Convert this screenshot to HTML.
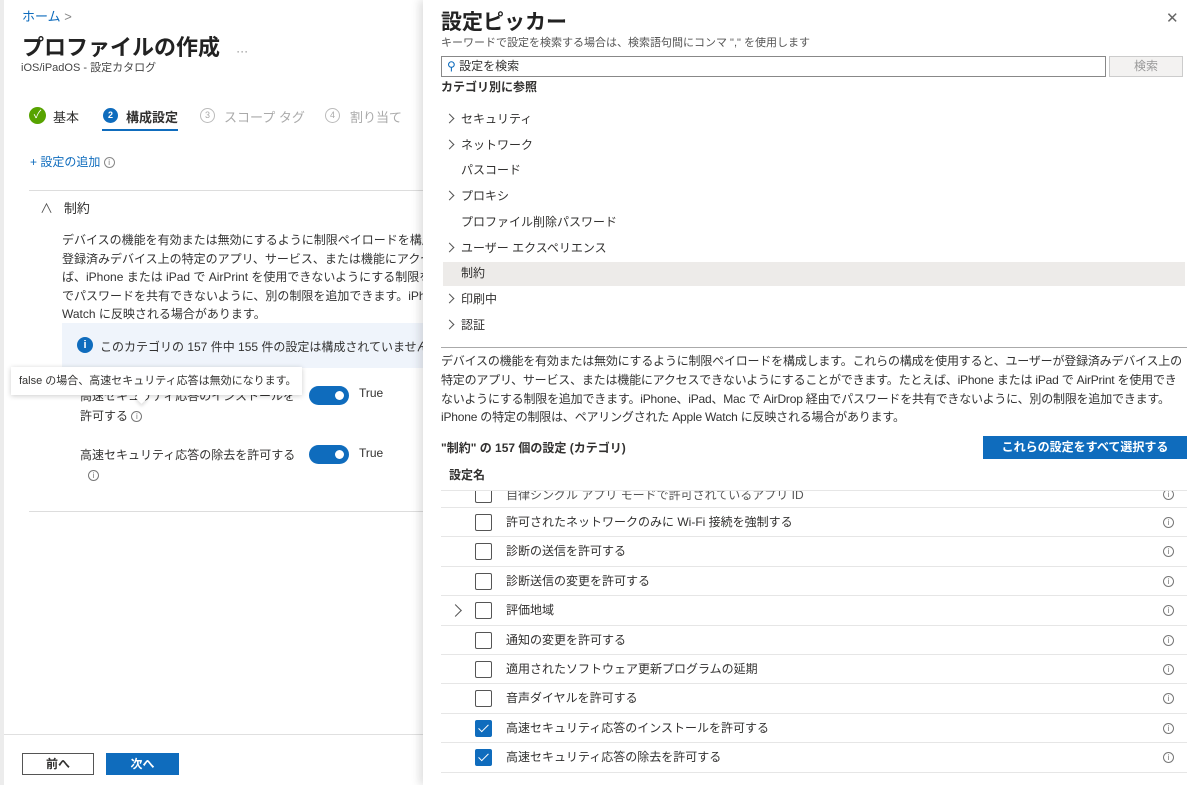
<!DOCTYPE html>
<html><head><meta charset="utf-8"><style>
*{margin:0;padding:0;box-sizing:border-box}
body{width:1200px;height:785px;overflow:hidden;background:#fff;font-family:"Liberation Sans","Noto Sans CJK JP",sans-serif;color:#323130;position:relative}
.a{position:absolute;white-space:nowrap}
.left{position:absolute;left:0;top:0;width:423px;height:785px;background:#fff;overflow:hidden}
.right{position:absolute;left:423px;top:0;width:777px;height:785px;background:#fff;box-shadow:-4px 0 8px rgba(0,0,0,.12)}
.info{display:inline-block;width:11px;height:11px;border:1px solid #777;border-radius:50%;font-size:8px;line-height:9px;text-align:center;color:#777;vertical-align:middle}
.tog{position:absolute;width:40px;height:19px;border-radius:10px;background:#0f6cbd}
.tog:after{content:"";position:absolute;right:5px;top:5px;width:9px;height:9px;border-radius:50%;background:#fff}
.chev{display:inline-block;width:7px;height:7px;border-right:1.3px solid #555;border-top:1.3px solid #555;transform:rotate(45deg);margin-right:8px;vertical-align:middle;position:relative;top:-1px}
.cb{position:absolute;left:34px;width:17px;height:17px;border:1.3px solid #555;border-radius:2px;background:#fff}
.cb.on{background:#0f6cbd;border-color:#0f6cbd}
.cb.on:after{content:"";position:absolute;left:5px;top:1px;width:4px;height:9px;border-right:1.5px solid #fff;border-bottom:1.5px solid #fff;transform:rotate(45deg)}
.row{position:absolute;left:18px;width:746px;height:29.4px;border-bottom:1px solid #e6e6e6;font-size:12px}
.row .t{position:absolute;left:65px;top:5px}
.row .info{position:absolute;left:722px;top:9px}
.row .cb{top:6px}
</style></head><body>
<div class="left">
<div class="a" style="left:0;top:0;width:4px;height:785px;background:#ececec"></div>
<div class="a" style="left:22px;top:6px;font-size:13px;color:#0f6cbd">ホーム <span style="color:#888">&gt;</span></div>
<div class="a" style="left:22px;top:30px;font-size:22px;font-weight:bold;color:#222">プロファイルの作成 <span style="font-size:12px;color:#888;font-weight:normal;margin-left:10px">···</span></div>
<div class="a" style="left:21px;top:59px;font-size:11px;color:#444">iOS/iPadOS - 設定カタログ</div>
<div class="a" style="left:29px;top:107px;width:17px;height:17px;border-radius:50%;background:#57a300;color:#fff;font-size:11px;text-align:center;line-height:17px">✓</div>
<div class="a" style="left:53px;top:107px;font-size:13px">基本</div>
<div class="a" style="left:103px;top:108px;width:15px;height:15px;border-radius:50%;background:#0f6cbd;color:#fff;font-size:9px;text-align:center;line-height:15px;font-weight:bold">2</div>
<div class="a" style="left:126px;top:107px;font-size:13px;font-weight:bold">構成設定</div>
<div class="a" style="left:102px;top:129px;width:76px;height:2px;background:#0f6cbd"></div>
<div class="a" style="left:200px;top:108px;width:15px;height:15px;border-radius:50%;border:1px solid #bbb;color:#aaa;font-size:9px;text-align:center;line-height:13px">3</div>
<div class="a" style="left:224px;top:107px;font-size:13px;color:#aaa">スコープ タグ</div>
<div class="a" style="left:325px;top:108px;width:15px;height:15px;border-radius:50%;border:1px solid #bbb;color:#aaa;font-size:9px;text-align:center;line-height:13px">4</div>
<div class="a" style="left:350px;top:107px;font-size:13px;color:#aaa">割り当て</div>
<div class="a" style="left:30px;top:153px;font-size:12px;color:#0f6cbd">+ 設定の追加 <span class="info" style="border-color:#888">i</span></div>
<div class="a" style="left:29px;top:190px;width:394px;height:1px;background:#ddd"></div>
<div class="a" style="left:40px;top:198px;font-size:13px"><span style="color:#555">∧</span>&nbsp;&nbsp; 制約</div>
<div class="a" style="left:62px;top:231px;font-size:12px;line-height:18.5px;color:#333">デバイスの機能を有効または無効にするように制限ペイロードを構成<br>登録済みデバイス上の特定のアプリ、サービス、または機能にアクセ<br>ば、iPhone または iPad で AirPrint を使用できないようにする制限を<br>でパスワードを共有できないように、別の制限を追加できます。iPh<br>Watch に反映される場合があります。</div>
<div class="a" style="left:62px;top:323px;width:361px;height:45px;background:#eff4fb"></div>
<div class="a" style="left:77px;top:337px;width:16px;height:16px;border-radius:50%;background:#0f6cbd;color:#fff;font-size:11px;font-weight:bold;text-align:center;line-height:16px">i</div>
<div class="a" style="left:100px;top:338px;font-size:12px">このカテゴリの 157 件中 155 件の設定は構成されていません</div>
<div class="a" style="left:80px;top:386px;font-size:12px;line-height:20px">高速セキュリティ応答のインストールを<br>許可する <span class="info">i</span></div>
<div class="tog" style="left:309px;top:386px"></div>
<div class="a" style="left:359px;top:386px;font-size:12px">True</div>
<div class="a" style="left:80px;top:445px;font-size:12px;line-height:20px">高速セキュリティ応答の除去を許可する<br><span class="info" style="margin-left:8px">i</span></div>
<div class="tog" style="left:309px;top:445px"></div>
<div class="a" style="left:359px;top:446px;font-size:12px">True</div>
<div class="a" style="left:11px;top:367px;width:291px;height:28px;background:#fff;box-shadow:0 1px 5px rgba(0,0,0,.2);font-size:11px;line-height:28px;padding-left:8px">false の場合、高速セキュリティ応答は無効になります。</div>
<div class="a" style="left:137px;top:393px;width:9px;height:9px;background:#fff;transform:rotate(45deg);box-shadow:2px 2px 3px rgba(0,0,0,.12)"></div>
<div class="a" style="left:29px;top:511px;width:394px;height:1px;background:#ddd"></div>
<div class="a" style="left:4px;top:734px;width:419px;height:1px;background:#e0e0e0"></div>
<div class="a" style="left:22px;top:753px;width:72px;height:22px;border:1px solid #555;font-size:12px;text-align:center;line-height:20px;font-weight:bold">前へ</div>
<div class="a" style="left:106px;top:753px;width:73px;height:22px;background:#0f6cbd;color:#fff;font-size:12px;text-align:center;line-height:22px;font-weight:bold">次へ</div>
</div>
<div class="right">
<div class="a" style="left:18px;top:6px;font-size:21px;font-weight:bold;color:#222">設定ピッカー</div>
<div class="a" style="left:743px;top:9px;font-size:15px;color:#666">✕</div>
<div class="a" style="left:18px;top:34px;font-size:11px;color:#555">キーワードで設定を検索する場合は、検索語句間にコンマ "," を使用します</div>
<div class="a" style="left:18px;top:56px;width:665px;height:21px;border:1px solid #888;font-size:12px;line-height:19px;padding-left:5px"><span style="color:#0f6cbd">⚲</span> 設定を検索</div>
<div class="a" style="left:686px;top:56px;width:74px;height:21px;border:1px solid #ccc;background:#f3f2f1;color:#999;font-size:12px;text-align:center;line-height:19px">検索</div>
<div class="a" style="left:18px;top:78px;font-size:12px;font-weight:bold">カテゴリ別に参照</div>
<div class="a" style="left:20px;top:262px;width:742px;height:24px;background:#edebe9"></div>
<div class="a" style="left:23px;top:107px;font-size:12px;line-height:25.7px"><span class="chev"></span>セキュリティ<br><span class="chev"></span>ネットワーク<br><span style="margin-left:15px">パスコード</span><br><span class="chev"></span>プロキシ<br><span style="margin-left:15px">プロファイル削除パスワード</span><br><span class="chev"></span>ユーザー エクスペリエンス<br><span style="margin-left:15px">制約</span><br><span class="chev"></span>印刷中<br><span class="chev"></span>認証</div>
<div class="a" style="left:18px;top:347px;width:746px;height:1px;background:#aaa"></div>
<div class="a" style="left:18px;top:352px;font-size:12px;line-height:18.8px;letter-spacing:-.2px;color:#333">デバイスの機能を有効または無効にするように制限ペイロードを構成します。これらの構成を使用すると、ユーザーが登録済みデバイス上の<br>特定のアプリ、サービス、または機能にアクセスできないようにすることができます。たとえば、iPhone または iPad で AirPrint を使用でき<br>ないようにする制限を追加できます。iPhone、iPad、Mac で AirDrop 経由でパスワードを共有できないように、別の制限を追加できます。<br>iPhone の特定の制限は、ペアリングされた Apple Watch に反映される場合があります。</div>
<div class="a" style="left:18px;top:439px;font-size:12px;font-weight:bold">"制約" の 157 個の設定 (カテゴリ)</div>
<div class="a" style="left:560px;top:436px;width:204px;height:23px;background:#0f6cbd;color:#fff;font-size:12px;font-weight:bold;text-align:center;line-height:23px">これらの設定をすべて選択する</div>
<div class="a" style="left:26px;top:466px;font-size:12px;font-weight:bold">設定名</div>
<div class="a" style="left:18px;top:490px;width:746px;height:1px;background:#e6e6e6"></div>
<div class="row" style="top:491px;height:17px;overflow:hidden"><div class="cb" style="top:-5px"></div><div class="t" style="top:-5px;color:#555">自律シングル アプリ モードで許可されているアプリ ID</div><span class="info" style="top:-2px">i</span></div>
<div class="row" style="top:508px"><div class="cb"></div><div class="t">許可されたネットワークのみに Wi-Fi 接続を強制する</div><span class="info">i</span></div>
<div class="row" style="top:537.4px"><div class="cb"></div><div class="t">診断の送信を許可する</div><span class="info">i</span></div>
<div class="row" style="top:566.8px"><div class="cb"></div><div class="t">診断送信の変更を許可する</div><span class="info">i</span></div>
<div class="row" style="top:596.2px"><span class="chev" style="position:absolute;left:10px;top:10px;width:9px;height:9px"></span><div class="cb"></div><div class="t">評価地域</div><span class="info">i</span></div>
<div class="row" style="top:625.6px"><div class="cb"></div><div class="t">通知の変更を許可する</div><span class="info">i</span></div>
<div class="row" style="top:655px"><div class="cb"></div><div class="t">適用されたソフトウェア更新プログラムの延期</div><span class="info">i</span></div>
<div class="row" style="top:684.4px"><div class="cb"></div><div class="t">音声ダイヤルを許可する</div><span class="info">i</span></div>
<div class="row" style="top:713.8px"><div class="cb on"></div><div class="t">高速セキュリティ応答のインストールを許可する</div><span class="info">i</span></div>
<div class="row" style="top:743.2px"><div class="cb on"></div><div class="t">高速セキュリティ応答の除去を許可する</div><span class="info">i</span></div>
</div>
</body></html>
